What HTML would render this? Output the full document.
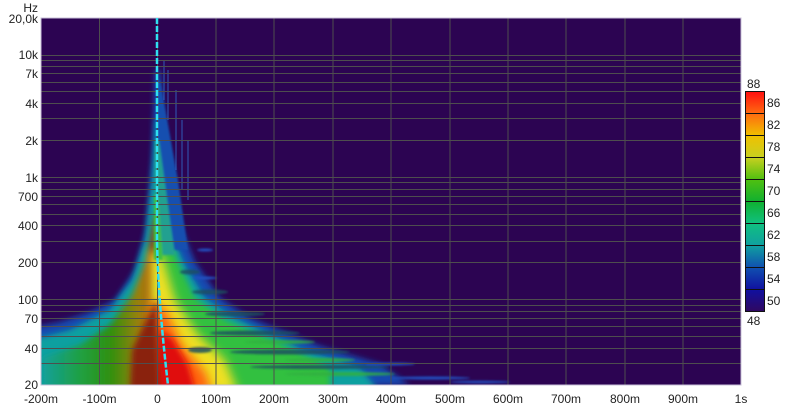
<!DOCTYPE html>
<html><head><meta charset="utf-8"><style>
html,body{margin:0;padding:0;background:#fff;width:800px;height:410px;overflow:hidden}
svg{display:block}
text{font-family:"Liberation Sans",sans-serif;font-size:12px;fill:#222}
</style></head><body>
<svg width="800" height="410" viewBox="0 0 800 410">
<defs>
<filter id="b6" x="-20%" y="-20%" width="140%" height="140%"><feGaussianBlur stdDeviation="5"/></filter>
<filter id="b3" x="-20%" y="-20%" width="140%" height="140%"><feGaussianBlur stdDeviation="3"/></filter>
<filter id="b1"><feGaussianBlur stdDeviation="1"/></filter>
<clipPath id="pc"><rect x="41" y="18" width="700" height="367"/></clipPath>
<linearGradient id="cb" x1="0" y1="0" x2="0" y2="1">
<stop offset="0" stop-color="#ff1010"/><stop offset="0.1" stop-color="#ff6a10"/>
<stop offset="0.2" stop-color="#f0c000"/><stop offset="0.3" stop-color="#c8d020"/>
<stop offset="0.4" stop-color="#50c010"/><stop offset="0.5" stop-color="#10b030"/>
<stop offset="0.6" stop-color="#10c080"/><stop offset="0.7" stop-color="#10a0a0"/>
<stop offset="0.8" stop-color="#1050b0"/><stop offset="0.9" stop-color="#1010a0"/>
<stop offset="1" stop-color="#300860"/></linearGradient>
<linearGradient id="lw" x1="0" y1="0" x2="1" y2="0">
<stop offset="0" stop-color="#10a0a0"/><stop offset="0.35" stop-color="#20a040"/>
<stop offset="0.6" stop-color="#309010"/><stop offset="0.85" stop-color="#a08010"/><stop offset="1" stop-color="#902008"/></linearGradient>
</defs>
<rect x="41" y="18" width="700" height="367" fill="#2c0452"/>
<g clip-path="url(#pc)">
 <!-- blue envelope -->
 <polygon filter="url(#b3)" fill="#1848b0" points="30,328 60,322 90,312 115,300 135,270 146,230 152,160 155,70 160,70 166,150 178,220 195,262 220,298 250,318 320,346 380,364 410,385 30,392"/>
 <!-- teal -->
 <polygon filter="url(#b3)" fill="#10a0a0" points="30,340 70,330 110,310 132,280 145,240 152,180 156,120 160,120 164,180 172,235 185,265 205,298 235,318 300,348 360,368 380,392 30,392"/>
 <!-- left wedge gradient -->
 <polygon filter="url(#b3)" fill="url(#lw)" points="40,358 80,345 110,325 132,295 146,262 154,220 158,210 158,392 40,392"/>
 <!-- green right -->
 <polygon filter="url(#b3)" fill="#30c040" points="156,215 164,225 178,262 195,298 225,320 290,348 330,368 330,392 156,392"/>
 <!-- yellow -->
 <polygon filter="url(#b6)" fill="#f0e020" points="150,250 162,255 175,300 198,335 225,360 238,392 150,392"/>
 <!-- orange/red -->
 <polygon filter="url(#b6)" fill="#ff6010" points="152,300 166,310 182,345 205,372 212,392 150,392"/>
 <polygon filter="url(#b3)" fill="#e01010" points="158,330 172,338 188,365 196,392 155,392"/>
 <polygon filter="url(#b3)" fill="#8a2008" points="132,350 156,300 160,392 130,392"/>
 <!-- dark bands on right -->
 <g filter="url(#b1)" fill="#1a5060" opacity="0.85">
  <ellipse cx="255" cy="333" rx="45" ry="2.5"/>
  <ellipse cx="290" cy="352" rx="60" ry="2.5"/>
  <ellipse cx="320" cy="367" rx="70" ry="2"/>
  <ellipse cx="235" cy="314" rx="30" ry="2.5"/>
  <ellipse cx="210" cy="292" rx="18" ry="2.5"/>
  <ellipse cx="190" cy="272" rx="10" ry="2.5"/>
  <ellipse cx="200" cy="350" rx="12" ry="3"/>
 </g>
 <g filter="url(#b1)" fill="#30b040" opacity="0.85">
  <ellipse cx="340" cy="374" rx="55" ry="2"/>
  <ellipse cx="320" cy="360" rx="35" ry="2"/>
  <ellipse cx="280" cy="342" rx="35" ry="2"/>
 </g>
 <g filter="url(#b1)" fill="#2050c0">
  <ellipse cx="430" cy="378" rx="40" ry="1.5"/>
  <ellipse cx="390" cy="364" rx="25" ry="1.5"/>
  <ellipse cx="480" cy="382" rx="30" ry="1.2"/>
  <ellipse cx="205" cy="250" rx="8" ry="1.5"/>
  <ellipse cx="205" cy="278" rx="12" ry="1.5"/>
 </g>
 <!-- high freq streaks -->
 <g filter="url(#b1)">
  <polygon fill="#1850b0" points="156,80 160,80 178,180 188,250 156,250"/>
  <polygon fill="#20a090" points="155,140 159,140 170,220 175,255 155,255"/>
  <polygon fill="#40c040" points="154,195 158,195 163,260 154,260"/>
 </g>
 <g stroke="#3070d0" stroke-width="1" opacity="0.8">
  <line x1="168" y1="70" x2="168" y2="120"/><line x1="176" y1="90" x2="176" y2="170"/>
  <line x1="182" y1="120" x2="182" y2="190"/><line x1="188" y1="140" x2="188" y2="200"/>
  <line x1="164" y1="60" x2="164" y2="100"/>
 </g>
</g>
<!-- grid -->
<g stroke="#4e4e4e" stroke-width="1">
 <line x1="99.5" y1="18" x2="99.5" y2="385"/><line x1="157.5" y1="18" x2="157.5" y2="385"/>
 <line x1="216" y1="18" x2="216" y2="385"/><line x1="274" y1="18" x2="274" y2="385"/>
 <line x1="333" y1="18" x2="333" y2="385"/><line x1="391" y1="18" x2="391" y2="385"/>
 <line x1="450" y1="18" x2="450" y2="385"/><line x1="508" y1="18" x2="508" y2="385"/>
 <line x1="566" y1="18" x2="566" y2="385"/><line x1="625" y1="18" x2="625" y2="385"/>
 <line x1="683" y1="18" x2="683" y2="385"/>
 <line x1="41" y1="363.5" x2="741" y2="363.5"/><line x1="41" y1="348.5" x2="741" y2="348.5"/>
 <line x1="41" y1="336.5" x2="741" y2="336.5"/><line x1="41" y1="326.5" x2="741" y2="326.5"/>
 <line x1="41" y1="318.5" x2="741" y2="318.5"/><line x1="41" y1="311.5" x2="741" y2="311.5"/>
 <line x1="41" y1="305.5" x2="741" y2="305.5"/><line x1="41" y1="299.5" x2="741" y2="299.5"/>
 <line x1="41" y1="262.5" x2="741" y2="262.5"/><line x1="41" y1="241.5" x2="741" y2="241.5"/>
 <line x1="41" y1="225.5" x2="741" y2="225.5"/><line x1="41" y1="214.5" x2="741" y2="214.5"/>
 <line x1="41" y1="204.5" x2="741" y2="204.5"/><line x1="41" y1="196.5" x2="741" y2="196.5"/>
 <line x1="41" y1="189.5" x2="741" y2="189.5"/><line x1="41" y1="182.5" x2="741" y2="182.5"/>
 <line x1="41" y1="177.5" x2="741" y2="177.5"/><line x1="41" y1="140.5" x2="741" y2="140.5"/>
 <line x1="41" y1="118.5" x2="741" y2="118.5"/><line x1="41" y1="103.5" x2="741" y2="103.5"/>
 <line x1="41" y1="91.5" x2="741" y2="91.5"/><line x1="41" y1="82.5" x2="741" y2="82.5"/>
 <line x1="41" y1="73.5" x2="741" y2="73.5"/><line x1="41" y1="66.5" x2="741" y2="66.5"/>
 <line x1="41" y1="60.5" x2="741" y2="60.5"/><line x1="41" y1="55.5" x2="741" y2="55.5"/>
</g>
<rect x="41" y="18" width="700" height="367" fill="none" stroke="#c8c0d8" stroke-width="1"/>
<path d="M157,18 L157,240 Q158,300 168,385" fill="none" stroke="#30e0f0" stroke-width="2.5" stroke-dasharray="6,2"/>
<g text-anchor="end">
<text x="38" y="12">Hz</text>
<text x="38" y="23">20,0k</text><text x="38" y="59">10k</text><text x="38" y="78">7k</text>
<text x="38" y="108">4k</text><text x="38" y="145">2k</text><text x="38" y="182">1k</text>
<text x="38" y="201">700</text><text x="38" y="230">400</text><text x="38" y="267">200</text>
<text x="38" y="304">100</text><text x="38" y="323">70</text><text x="38" y="353">40</text>
<text x="38" y="389">20</text>
</g>
<g text-anchor="middle">
<text x="41" y="403">-200m</text><text x="99.5" y="403">-100m</text><text x="157.5" y="403">0</text>
<text x="216" y="403">100m</text><text x="274" y="403">200m</text><text x="333" y="403">300m</text>
<text x="391" y="403">400m</text><text x="450" y="403">500m</text><text x="508" y="403">600m</text>
<text x="566" y="403">700m</text><text x="625" y="403">800m</text><text x="683" y="403">900m</text>
<text x="741" y="403">1s</text>
</g>
<rect x="745.5" y="91.5" width="19" height="220" fill="url(#cb)" stroke="#111"/>
<g stroke="#111">
<line x1="745" y1="113.5" x2="765" y2="113.5"/><line x1="745" y1="135.5" x2="765" y2="135.5"/>
<line x1="745" y1="157.5" x2="765" y2="157.5"/><line x1="745" y1="179.5" x2="765" y2="179.5"/>
<line x1="745" y1="201.5" x2="765" y2="201.5"/><line x1="745" y1="223.5" x2="765" y2="223.5"/>
<line x1="745" y1="245.5" x2="765" y2="245.5"/><line x1="745" y1="267.5" x2="765" y2="267.5"/>
<line x1="745" y1="289.5" x2="765" y2="289.5"/>
</g>
<text x="747" y="88">88</text><text x="747" y="325">48</text>
<text x="767" y="107">86</text><text x="767" y="129">82</text><text x="767" y="151">78</text>
<text x="767" y="173">74</text><text x="767" y="195">70</text><text x="767" y="217">66</text>
<text x="767" y="239">62</text><text x="767" y="261">58</text><text x="767" y="283">54</text>
<text x="767" y="305">50</text>
</svg>
</body></html>
